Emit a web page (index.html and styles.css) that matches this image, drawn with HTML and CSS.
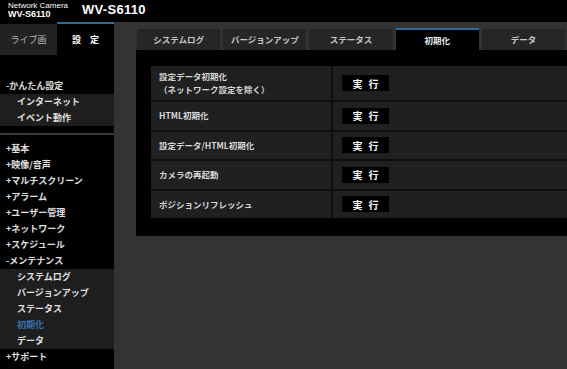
FILE: index.html
```html
<!DOCTYPE html>
<html lang="ja">
<head>
    <meta charset="UTF-8">
    <meta name="viewport" content="width=device-width, initial-scale=1.0">
    <title>WV-S6110 メンテナンス</title>
    <link rel="stylesheet" href="styles.css">
</head>
<body>
    <div class="header">
        <div class="brand">
            <div class="brand-sub">Network Camera</div>
            <div class="brand-model">WV-S6110</div>
        </div>
        <div class="model">WV-S6110</div>
    </div>

    <div class="main">
        <aside class="sidebar">
            <div class="mode-tabs">
                <div class="mode-tab">ライブ画</div>
                <div class="mode-tab active">設定</div>
            </div>
            <div class="menu">
                <div class="menu-item">-かんたん設定</div>
                <div class="submenu">
                    <div class="sub-item">インターネット</div>
                    <div class="sub-item">イベント動作</div>
                </div>
                <div class="separator"></div>
                <div class="menu-item">+基本</div>
                <div class="menu-item">+映像/音声</div>
                <div class="menu-item">+マルチスクリーン</div>
                <div class="menu-item">+アラーム</div>
                <div class="menu-item">+ユーザー管理</div>
                <div class="menu-item">+ネットワーク</div>
                <div class="menu-item">+スケジュール</div>
                <div class="menu-item open">-メンテナンス</div>
                <div class="submenu">
                    <div class="sub-item">システムログ</div>
                    <div class="sub-item">バージョンアップ</div>
                    <div class="sub-item">ステータス</div>
                    <div class="sub-item current">初期化</div>
                    <div class="sub-item">データ</div>
                </div>
                <div class="menu-item">+サポート</div>
            </div>
        </aside>

        <section class="content">
            <nav class="tabs">
                <div class="tab">システムログ</div>
                <div class="tab">バージョンアップ</div>
                <div class="tab">ステータス</div>
                <div class="tab active">初期化</div>
                <div class="tab">データ</div>
            </nav>
            <div class="panel">
                <div class="rows">
                    <div class="row tall">
                        <div class="label">設定データ初期化<br>（ネットワーク設定を除く）</div>
                        <div class="action"><button class="run">実行</button></div>
                    </div>
                    <div class="row">
                        <div class="label">HTML初期化</div>
                        <div class="action"><button class="run">実行</button></div>
                    </div>
                    <div class="row">
                        <div class="label">設定データ/HTML初期化</div>
                        <div class="action"><button class="run">実行</button></div>
                    </div>
                    <div class="row">
                        <div class="label">カメラの再起動</div>
                        <div class="action"><button class="run">実行</button></div>
                    </div>
                    <div class="row">
                        <div class="label">ポジションリフレッシュ</div>
                        <div class="action"><button class="run">実行</button></div>
                    </div>
                </div>
            </div>
        </section>
    </div>
</body>
</html>
```

FILE: styles.css
```css
html, body {
    margin: 0;
    height: 100%;
    overflow: hidden;
}
body {
    background-color: #333333;
    color: #e6e6e6;
    font-family: "Noto Sans CJK JP", "Liberation Sans", sans-serif;
    font-size: 9px;
}
.header {
    height: 22px;
    background: #000;
    display: flex;
    align-items: flex-start;
    font-family: "Liberation Sans", Arial, sans-serif;
    color: #fff;
}
.brand {
    width: 74px;
    padding-left: 8px;
    padding-top: 1px;
}
.brand-sub {
    font-size: 8px;
    line-height: 9px;
}
.brand-model {
    font-size: 9px;
    font-weight: bold;
    line-height: 8px;
}
.model {
    font-size: 13px;
    font-weight: bold;
    line-height: 19px;
    letter-spacing: 0.3px;
}
.main {
    display: flex;
    height: calc(100% - 22px);
}
.sidebar {
    width: 114px;
    flex-shrink: 0;
    background: #000;
}
.mode-tabs {
    display: flex;
}
.mode-tab {
    width: 57px;
    height: 31px;
    line-height: 31px;
    text-align: center;
    border-top: 2px solid #000;
    background: #222222;
    color: #b8b8b8;
}
.mode-tab.active {
    background: #000;
    border-top-color: #2f6a9c;
    color: #fff;
    font-weight: bold;
    letter-spacing: 9px;
    text-indent: 9px;
}
.menu {
    padding-top: 23px;
    font-weight: bold;
    color: #e0e0e0;
}
.menu-item {
    line-height: 16px;
    padding-left: 6px;
}
.submenu {
    background: #1e1e1f;
}
.sub-item {
    line-height: 16px;
    padding-left: 17px;
}
.sub-item.current {
    color: #3a73b4;
}
.separator {
    height: 2px;
    margin: 7px 0 6px;
    background: #3b3b3b;
}
.content {
    flex: 1;
    padding: 7px 2px 0 22px;
    min-width: 0;
}
.tabs {
    display: flex;
    align-items: flex-end;
    gap: 3px;
    height: 21px;
    padding-left: 1px;
}
.tab {
    flex: 1;
    height: 21px;
    line-height: 21px;
    text-align: center;
    background: #262626;
    color: #c8c8c8;
    font-size: 8.5px;
    font-weight: bold;
}
.tab.active {
    height: 20px;
    border-top: 2px solid #2f6a9c;
    background: #000;
    color: #e8eef4;
}
.panel {
    background: #000;
    margin-right: -2px;
    padding: 16px 0 18px 15px;
    overflow: hidden;
}
.rows {
    width: 520px;
    display: grid;
    grid-template-rows: 34px repeat(4, 27.5px);
    gap: 2px;
    background: #0e0e0f;
}
.row {
    display: grid;
    grid-template-columns: 180px 1fr;
    gap: 2px;
}
.label {
    background: #202021;
    padding-left: 8px;
    display: flex;
    align-items: center;
    line-height: 13px;
    color: #d8d8d8;
    font-size: 8.5px;
    font-weight: bold;
}
.action {
    background: #202021;
    padding-left: 9px;
    display: flex;
    align-items: center;
}
.run {
    width: 47px;
    height: 16px;
    padding: 0 0 0 6px;
    border: none;
    background: #000;
    color: #fff;
    font-family: "Noto Sans CJK JP", sans-serif;
    font-size: 10px;
    font-weight: bold;
    letter-spacing: 6px;
    cursor: pointer;
}
```
